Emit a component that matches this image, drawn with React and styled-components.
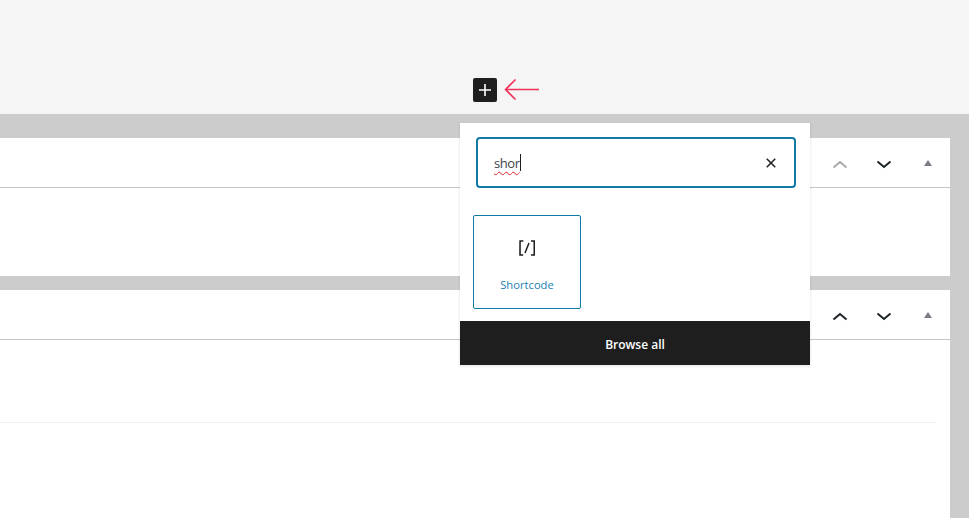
import React from 'react';
import styled, { createGlobalStyle } from 'styled-components';

const GlobalStyle = createGlobalStyle`
  html, body {
    margin: 0;
    padding: 0;
    height: 518px;
    overflow: hidden;
    background: #cccccc;
    font-family: 'Open Sans', 'Noto Sans', sans-serif;
  }
`;

const Page = styled.div`
  position: relative;
  width: 969px;
  height: 518px;
  overflow: hidden;
`;

const TopBar = styled.div`
  display: flex;
  align-items: flex-start;
  gap: 7px;
  height: 114px;
  box-sizing: border-box;
  padding: 78px 0 0 473px;
  background: #f5f5f5;
`;

const PlusButton = styled.button`
  display: flex;
  align-items: center;
  justify-content: center;
  width: 24px;
  height: 24px;
  padding: 0;
  border: 0;
  border-radius: 2px;
  background: #1e1e1e;
  color: #ffffff;
`;

const Work = styled.div`
  display: flex;
  flex-direction: column;
  gap: 14px;
  padding: 24px 19px 0 0;
`;

const Panel = styled.section`
  background: #ffffff;
  height: ${(p) => p.$height}px;
`;

const PanelHeader = styled.div`
  display: flex;
  justify-content: flex-end;
  align-items: center;
  height: 49px;
  border-bottom: 1px solid #c3c4c7;
`;

const HandleButton = styled.button`
  display: flex;
  align-items: center;
  justify-content: center;
  width: 44px;
  height: 49px;
  padding: 0;
  border: 0;
  background: none;
  color: ${(p) => (p.$disabled ? '#a7aaad' : '#1d2327')};
`;

const PanelBody = styled.div`
  padding: 82px 14px 0 0;
`;

const Rule = styled.div`
  border-top: 1px solid #f0f0f0;
`;

const Popover = styled.div`
  position: absolute;
  left: 460px;
  top: 123px;
  display: flex;
  flex-direction: column;
  width: 350px;
  height: 242px;
  background: #ffffff;
  box-shadow: 0 1px 3px rgba(0, 0, 0, 0.12);
`;

const SearchField = styled.div`
  display: flex;
  align-items: center;
  justify-content: space-between;
  box-sizing: border-box;
  width: 320px;
  height: 51px;
  margin: 14px 0 0 16px;
  padding: 0 11px 0 16px;
  border: 2px solid #0f7ba3;
  border-radius: 4px;
`;

const SearchText = styled.span`
  display: flex;
  align-items: center;
  font-size: 13px;
  line-height: 18px;
  letter-spacing: -0.4px;
  color: #3c434a;
  text-decoration: underline wavy #e0202a 1px;
  text-underline-offset: 3px;
`;

const Caret = styled.i`
  display: block;
  width: 1px;
  height: 17px;
  background: #1e1e1e;
`;

const ClearButton = styled.button`
  display: flex;
  padding: 0;
  border: 0;
  background: none;
  color: #1e1e1e;
`;

const Results = styled.div`
  flex: 1;
  padding: 27px 0 0 13px;
`;

const BlockTile = styled.button`
  display: flex;
  flex-direction: column;
  align-items: center;
  box-sizing: border-box;
  width: 108px;
  height: 94px;
  padding: 20px 0 0;
  border: 1px solid #0f7ba3;
  border-radius: 2px;
  background: #ffffff;
  font-family: inherit;
`;

const TileIcon = styled.span`
  display: flex;
  color: #1e1e1e;
`;

const TileLabel = styled.span`
  margin-top: 17px;
  font-size: 11.2px;
  line-height: 16px;
  color: #1a7fb0;
`;

const BrowseAll = styled.button`
  height: 44px;
  padding: 2px 0 0;
  border: 0;
  background: #1e1e1e;
  color: #ffffff;
  font-family: inherit;
  font-size: 12px;
  font-weight: 600;
`;

const ChevronUp = () => (
  <svg width="24" height="24" viewBox="0 0 24 24" fill="none" stroke="currentColor" strokeWidth="2">
    <path d="M5.5 16.5L12 11l6.5 5.5" />
  </svg>
);

const ChevronDown = () => (
  <svg width="24" height="24" viewBox="0 0 24 24" fill="none" stroke="currentColor" strokeWidth="2">
    <path d="M5.5 10.5L12 16l6.5-5.5" />
  </svg>
);

const Triangle = () => (
  <svg width="24" height="24" viewBox="0 0 24 24" fill="#787c82">
    <path d="M8 15l4-6 4 6z" />
  </svg>
);

const PanelActions = ({ upDisabled }) => (
  <PanelHeader>
    <HandleButton $disabled={upDisabled}>
      <ChevronUp />
    </HandleButton>
    <HandleButton>
      <ChevronDown />
    </HandleButton>
    <HandleButton>
      <Triangle />
    </HandleButton>
  </PanelHeader>
);

export default function App() {
  return (
    <Page>
      <GlobalStyle />
      <TopBar>
        <PlusButton>
          <svg width="24" height="24" viewBox="0 0 24 24" fill="currentColor">
            <path d="M18 11.2h-5.2V6h-1.6v5.2H6v1.6h5.2V18h1.6v-5.2H18z" />
          </svg>
        </PlusButton>
        <svg width="36" height="24" viewBox="0 0 36 24" fill="none" stroke="#f0325a" strokeWidth="1.6">
          <path d="M35 11.5H1.5M11.5 1.5l-10 10 10 10" />
        </svg>
      </TopBar>
      <Work>
        <Panel $height={138}>
          <PanelActions upDisabled />
        </Panel>
        <Panel $height={228}>
          <PanelActions />
          <PanelBody>
            <Rule />
          </PanelBody>
        </Panel>
      </Work>
      <Popover>
        <SearchField>
          <SearchText>
            shor
            <Caret />
          </SearchText>
          <ClearButton>
            <svg width="24" height="24" viewBox="0 0 24 24" fill="currentColor">
              <path d="M12 13.06l3.712 3.713 1.061-1.06L13.061 12l3.712-3.712-1.06-1.06L12 10.938 8.288 7.227l-1.061 1.06L10.939 12l-3.712 3.712 1.06 1.061L12 13.061z" />
            </svg>
          </ClearButton>
        </SearchField>
        <Results>
          <BlockTile>
            <TileIcon>
              <svg width="24" height="24" viewBox="0 0 24 24" fill="currentColor">
                <path d="M16 4.2v1.5h2.5v12.5H16v1.5h4V4.2h-4zM4.2 19.8h4v-1.5H5.8V5.8h2.5V4.2h-4l-.1 15.6zm5.1-3.1l1.4.6 4-10-1.4-.6-4 10z" />
              </svg>
            </TileIcon>
            <TileLabel>Shortcode</TileLabel>
          </BlockTile>
        </Results>
        <BrowseAll>Browse all</BrowseAll>
      </Popover>
    </Page>
  );
}
